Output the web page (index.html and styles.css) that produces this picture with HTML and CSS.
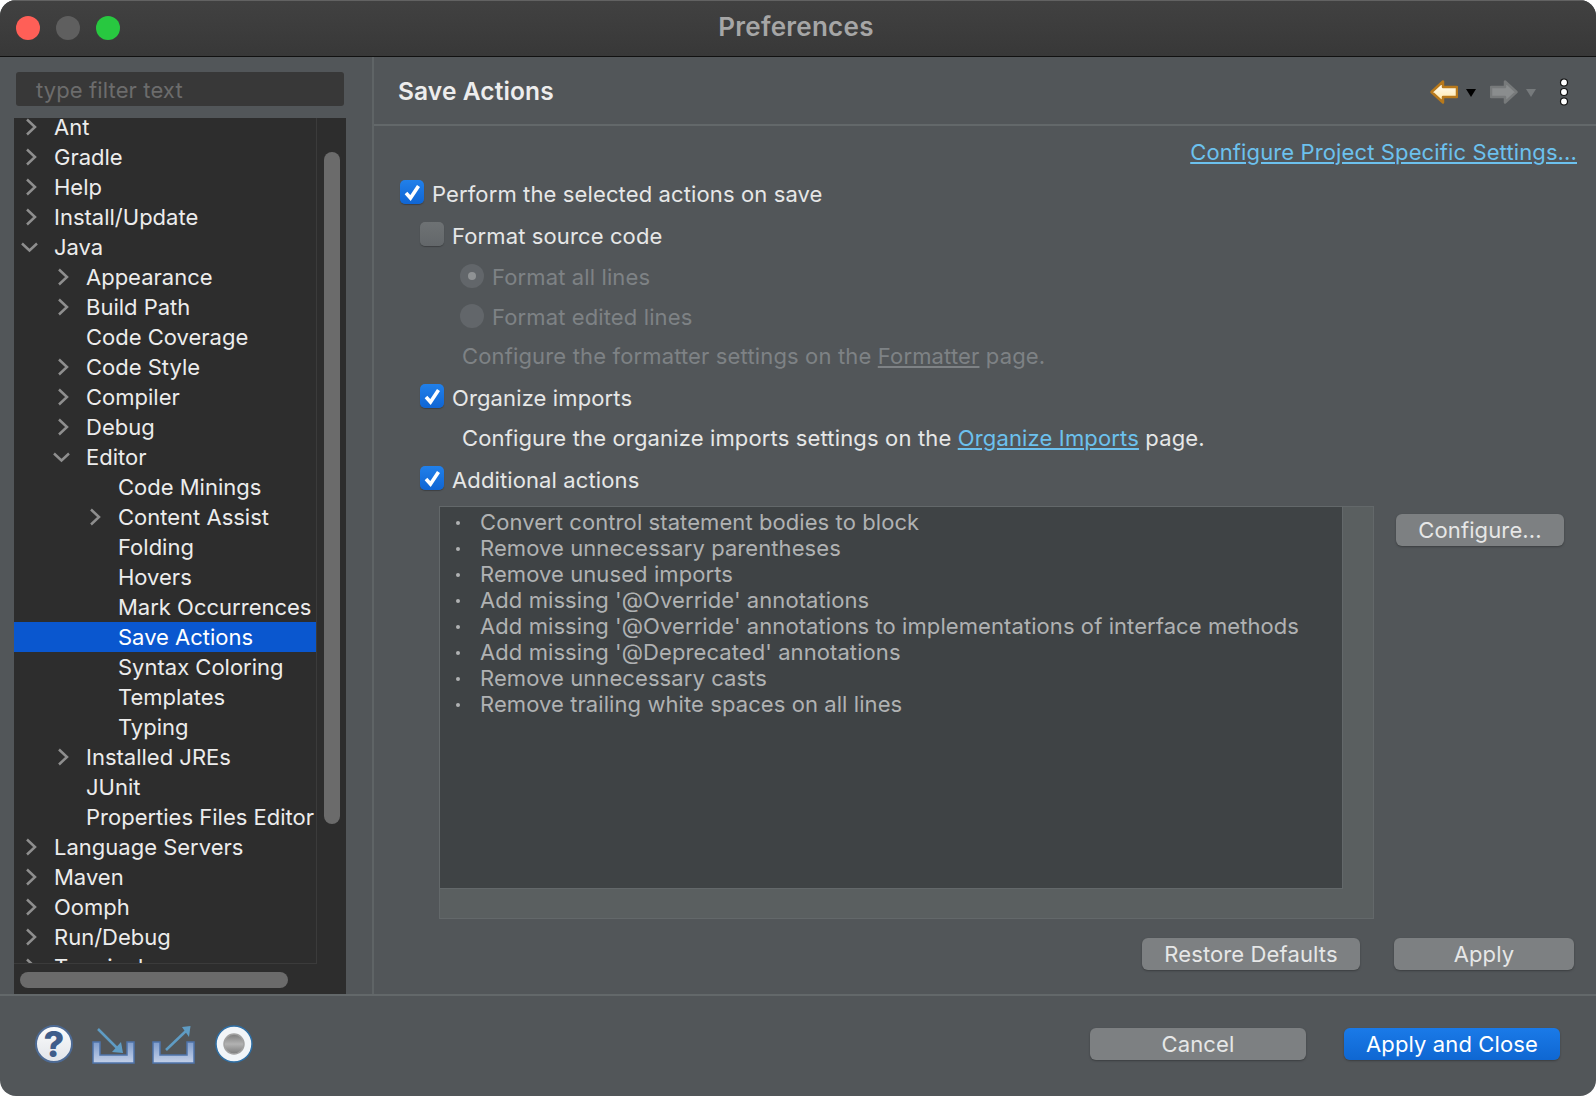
FILE: index.html
```html
<!DOCTYPE html>
<html lang="en">
<head>
    <meta charset="UTF-8">
    <title>Preferences</title>
    <link rel="stylesheet" href="styles.css">
</head>
<body>
<div class="window">
    <div class="titlebar">
        <div class="lights">
            <span class="light red"></span>
            <span class="light grey"></span>
            <span class="light green"></span>
        </div>
        <div class="title">Preferences</div>
    </div>

    <div class="main">
        <div class="side">
            <div class="filter">type filter text</div>
            <div class="tree">
                <div class="tree-view">
                    <div class="tree-list">
                        <div class="node"><svg class="chev" viewBox="0 0 18 18"><path d="M5 1.500l8 7.500-8 7.500"/></svg>Ant</div>
                        <div class="node"><svg class="chev" viewBox="0 0 18 18"><path d="M5 1.500l8 7.500-8 7.500"/></svg>Gradle</div>
                        <div class="node"><svg class="chev" viewBox="0 0 18 18"><path d="M5 1.500l8 7.500-8 7.500"/></svg>Help</div>
                        <div class="node"><svg class="chev" viewBox="0 0 18 18"><path d="M5 1.500l8 7.500-8 7.500"/></svg>Install/Update</div>
                        <div class="node"><svg class="chev" viewBox="0 0 18 18"><path d="M0 5.500l7.500 7 7.500-7"/></svg>Java</div>
                        <div class="node lv1"><svg class="chev" viewBox="0 0 18 18"><path d="M5 1.500l8 7.500-8 7.500"/></svg>Appearance</div>
                        <div class="node lv1"><svg class="chev" viewBox="0 0 18 18"><path d="M5 1.500l8 7.500-8 7.500"/></svg>Build Path</div>
                        <div class="node lv1 leaf">Code Coverage</div>
                        <div class="node lv1"><svg class="chev" viewBox="0 0 18 18"><path d="M5 1.500l8 7.500-8 7.500"/></svg>Code Style</div>
                        <div class="node lv1"><svg class="chev" viewBox="0 0 18 18"><path d="M5 1.500l8 7.500-8 7.500"/></svg>Compiler</div>
                        <div class="node lv1"><svg class="chev" viewBox="0 0 18 18"><path d="M5 1.500l8 7.500-8 7.500"/></svg>Debug</div>
                        <div class="node lv1"><svg class="chev" viewBox="0 0 18 18"><path d="M0 5.500l7.500 7 7.500-7"/></svg>Editor</div>
                        <div class="node lv2 leaf">Code Minings</div>
                        <div class="node lv2"><svg class="chev" viewBox="0 0 18 18"><path d="M5 1.500l8 7.500-8 7.500"/></svg>Content Assist</div>
                        <div class="node lv2 leaf">Folding</div>
                        <div class="node lv2 leaf">Hovers</div>
                        <div class="node lv2 leaf">Mark Occurrences</div>
                        <div class="node lv2 leaf selected">Save Actions</div>
                        <div class="node lv2 leaf">Syntax Coloring</div>
                        <div class="node lv2 leaf">Templates</div>
                        <div class="node lv2 leaf">Typing</div>
                        <div class="node lv1"><svg class="chev" viewBox="0 0 18 18"><path d="M5 1.500l8 7.500-8 7.500"/></svg>Installed JREs</div>
                        <div class="node lv1 leaf">JUnit</div>
                        <div class="node lv1 leaf">Properties Files Editor</div>
                        <div class="node"><svg class="chev" viewBox="0 0 18 18"><path d="M5 1.500l8 7.500-8 7.500"/></svg>Language Servers</div>
                        <div class="node"><svg class="chev" viewBox="0 0 18 18"><path d="M5 1.500l8 7.500-8 7.500"/></svg>Maven</div>
                        <div class="node"><svg class="chev" viewBox="0 0 18 18"><path d="M5 1.500l8 7.500-8 7.500"/></svg>Oomph</div>
                        <div class="node"><svg class="chev" viewBox="0 0 18 18"><path d="M5 1.500l8 7.500-8 7.500"/></svg>Run/Debug</div>
                        <div class="node"><svg class="chev" viewBox="0 0 18 18"><path d="M5 1.500l8 7.500-8 7.500"/></svg>Terminal</div>
                    </div>
                </div>
                <div class="vbar"><div class="vthumb"></div></div>
                <div class="hbar"><div class="hthumb"></div></div>
                <div class="corner"></div>
            </div>
        </div>

        <div class="page">
            <div class="page-head">
                <h1 class="page-title">Save Actions</h1>
                <div class="page-tools">
                    <svg class="arrow" viewBox="0 0 28 24">
                        <defs>
                            <linearGradient id="backFill" x1="0" y1="0" x2="0" y2="1">
                                <stop offset="0" stop-color="#ffffff"/>
                                <stop offset="1" stop-color="#ffe6a0"/>
                            </linearGradient>
                        </defs>
                        <path class="arrow-back" d="M1.500 12L13 1.500V7H27V17H13V22.500Z"/>
                    </svg>
                    <span class="drop"></span>
                    <svg class="arrow fwd" viewBox="0 0 28 24"><path class="arrow-fwd" d="M26.500 12L15 1.500V7H1V17H15V22.500Z"/></svg>
                    <span class="drop off"></span>
                    <svg class="dots" viewBox="0 0 10 28"><circle cx="5" cy="4.500" r="3.500"/><circle cx="5" cy="14" r="3.500"/><circle cx="5" cy="23.500" r="3.500"/></svg>
                </div>
            </div>

            <div class="page-body">
                <div class="link-row"><a class="link" href="#">Configure Project Specific Settings...</a></div>

                <div class="form">
                    <div class="opt"><span class="check on"><svg viewBox="0 0 24 24"><path d="M6 13l4.500 5L18.500 6"/></svg></span>Perform the selected actions on save</div>
                    <div class="opt in1"><span class="check"></span>Format source code</div>
                    <div class="opt in2 off"><span class="radio on"></span>Format all lines</div>
                    <div class="opt in2 off"><span class="radio"></span>Format edited lines</div>
                    <div class="opt note off">Configure the formatter settings on the&nbsp;<u>Formatter</u>&nbsp;page.</div>
                    <div class="opt in1"><span class="check on"><svg viewBox="0 0 24 24"><path d="M6 13l4.500 5L18.500 6"/></svg></span>Organize imports</div>
                    <div class="opt note">Configure the organize imports settings on the&nbsp;<a class="link" href="#">Organize Imports</a>&nbsp;page.</div>
                    <div class="opt in1"><span class="check on"><svg viewBox="0 0 24 24"><path d="M6 13l4.500 5L18.500 6"/></svg></span>Additional actions</div>
                </div>

                <div class="actions">
                    <div class="frame">
                        <ul class="action-list">
                            <li>Convert control statement bodies to block</li>
                            <li>Remove unnecessary parentheses</li>
                            <li>Remove unused imports</li>
                            <li>Add missing '@Override' annotations</li>
                            <li>Add missing '@Override' annotations to implementations of interface methods</li>
                            <li>Add missing '@Deprecated' annotations</li>
                            <li>Remove unnecessary casts</li>
                            <li>Remove trailing white spaces on all lines</li>
                        </ul>
                    </div>
                    <button class="btn btn-configure">Configure...</button>
                </div>

                <div class="page-buttons">
                    <button class="btn btn-restore">Restore Defaults</button>
                    <button class="btn btn-apply">Apply</button>
                </div>
            </div>
        </div>
    </div>

    <div class="footer">
        <div class="foot-icons">
            <div class="help">?</div>
            <svg class="ficon ficon-import" width="44" height="39" viewBox="0 0 44 39">
                <defs>
                    <linearGradient id="trayFill" x1="0" y1="0" x2="0" y2="1">
                        <stop offset="0" stop-color="#7f9ccb"/>
                        <stop offset="1" stop-color="#c3d0e8"/>
                    </linearGradient>
                    <linearGradient id="stopFill" x1="0" y1="0" x2="0" y2="1">
                        <stop offset="0" stop-color="#7c7c7c"/>
                        <stop offset="0.500" stop-color="#b2b2b2"/>
                        <stop offset="1" stop-color="#7c7c7c"/>
                    </linearGradient>
                </defs>
                <path class="tray" d="M1 17H8V30H35V17H42V38H1Z"/>
                <path class="tray-arrow" d="M6 4L27 25"/>
                <path class="tray-head" d="M20 27L31 28L29 17Z"/>
            </svg>
            <svg class="ficon" width="44" height="39" viewBox="0 0 44 39">
                <path class="tray" d="M1 17H8V30H35V17H42V38H1Z"/>
                <path class="tray-arrow" d="M14 25L35 5"/>
                <path class="tray-head" d="M30 2L38.500 1L37 12Z"/>
            </svg>
            <svg class="ficon ficon-record" width="38" height="38" viewBox="0 0 38 38">
                <circle cx="19" cy="19" r="18" fill="#f2f5f8" stroke="#2f6fa5" stroke-width="1.500"/>
                <circle cx="19" cy="19" r="10" fill="url(#stopFill)" stroke="#a2a2a2" stroke-width="1.500"/>
            </svg>
        </div>
        <div class="foot-buttons">
            <button class="btn btn-cancel">Cancel</button>
            <button class="btn btn-primary">Apply and Close</button>
        </div>
    </div>
</div>
</body>
</html>
```

FILE: styles.css
```css
* {
    box-sizing: border-box;
}
html, body {
    margin: 0;
    background: #fff;
}
body {
    font-family: Inter, "Liberation Sans", sans-serif;
    font-size: 22px;
    letter-spacing: .12px;
    color: #e6e7e7;
}
.window {
    width: 1596px;
    height: 1096px;
    background: #525659;
    border-radius: 16px;
    overflow: hidden;
    display: flex;
    flex-direction: column;
}

/* title bar */
.titlebar {
    height: 57px;
    flex: none;
    display: flex;
    align-items: center;
    background: linear-gradient(#414141, #383838);
    border-top: 1px solid #626262;
    border-bottom: 1px solid #111;
}
.lights {
    display: flex;
    gap: 16px;
    margin: 0 0 2px 16px;
    width: 0;
}
.light {
    flex: none;
    width: 24px;
    height: 24px;
    border-radius: 50%;
}
.red { background: #ff5f57; }
.grey { background: #5f5f5f; }
.green { background: #28c840; }
.title {
    flex: 1;
    margin: 0 20px 4px 0;
    text-align: center;
    font-weight: 600;
    font-size: 26px;
    letter-spacing: .25px;
    color: #a6a6a6;
}

.main {
    flex: 1;
    display: flex;
    min-height: 0;
}

/* left side */
.side {
    width: 374px;
    flex: none;
    padding: 15px 0 0 14px;
    border-right: 2px solid #5f6466;
}
.filter {
    width: 328px;
    height: 34px;
    margin-left: 2px;
    padding: 1px 0 0 20px;
    line-height: 34px;
    background: #383838;
    border-radius: 3px;
    color: #6c6c6c;
}
.tree {
    width: 332px;
    height: 876px;
    margin-top: 12px;
    background: #2d2d2d;
    display: grid;
    grid-template-columns: 303px 29px;
    grid-template-rows: 846px 30px;
    letter-spacing: 0;
}
.tree-view {
    overflow: hidden;
    border-right: 1px solid #3b3b3b;
    border-bottom: 1px solid #3b3b3b;
}
.tree-list {
    margin-top: -6px;
}
.node {
    height: 30px;
    display: flex;
    align-items: center;
    padding-left: 40px;
    white-space: nowrap;
    color: #ececec;
}
.node.lv1 { padding-left: 72px; }
.node.lv2 { padding-left: 104px; }
.node.selected {
    background: #0a57cf;
    color: #fff;
}
.chev {
    flex: none;
    width: 18px;
    height: 18px;
    margin-left: -32px;
    margin-right: 14px;
    fill: none;
    stroke: #8e8e8e;
    stroke-width: 2.500;
    overflow: visible;
}
.vthumb {
    width: 16px;
    height: 672px;
    margin: 34px 0 0 7px;
    border-radius: 8px;
    background: #6b6b6b;
}
.hthumb {
    width: 268px;
    height: 16px;
    margin: 8px 0 0 6px;
    border-radius: 8px;
    background: #6b6b6b;
}

/* right page */
.page {
    flex: 1;
    display: flex;
    flex-direction: column;
}
.page-head {
    height: 69px;
    flex: none;
    display: flex;
    align-items: center;
    justify-content: space-between;
    padding: 0 27px 1px 24px;
    border-bottom: 2px solid #63686a;
}
.page-title {
    margin: 2px 0 0;
    font-size: 24.500px;
    font-weight: 600;
    color: #ededed;
}
.page-tools {
    display: flex;
    align-items: center;
    margin-top: 4px;
}
.arrow {
    width: 28px;
    height: 24px;
}
.arrow-back {
    fill: url(#backFill);
    stroke: #b8791b;
    stroke-width: 2.500;
    stroke-linejoin: round;
}
.arrow-fwd {
    fill: #8a8d8e;
    stroke: #777a7b;
    stroke-width: 2.500;
    stroke-linejoin: round;
}
.drop {
    width: 0;
    height: 0;
    margin: 2px 0 0 8px;
    border-left: 5px solid transparent;
    border-right: 5px solid transparent;
    border-top: 8px solid #000;
}
.drop.off {
    border-top-color: #767a7c;
}
.arrow.fwd {
    margin-left: 14px;
}
.dots {
    width: 10px;
    height: 28px;
    margin-left: 23px;
    fill: #fff;
    stroke: #111;
    stroke-width: 1.200;
}
.page-body {
    flex: 1;
    padding: 0 19px 0 26px;
    display: flex;
    flex-direction: column;
}
.link-row {
    margin-top: 11px;
    height: 30px;
    line-height: 30px;
    text-align: right;
}
.link {
    color: #6cc1ee;
    text-decoration: underline;
}
.form {
    margin-top: 12px;
    display: grid;
    grid-template-rows: 42px 41px 40px 39px 42px 40px 42px 42px;
}
.opt {
    height: 30px;
    display: flex;
    align-items: center;
    white-space: pre;
}
.opt.in1 { padding-left: 20px; }
.opt.in2 { padding-left: 60px; }
.opt.note {
    padding-left: 62px;
    letter-spacing: .15px;
}
.opt.off { color: #7e8285; }
.check {
    flex: none;
    width: 24px;
    height: 24px;
    margin: 0 8px 4px 0;
    border-radius: 5px;
    background: linear-gradient(#6e7274, #63676a);
    box-shadow: 0 1px 1px #3d4042;
}
.check.on {
    background: linear-gradient(#2180ea, #0f65d4);
}
.check svg {
    display: block;
    fill: none;
    stroke: #fff;
    stroke-width: 3.600;
}
.radio {
    flex: none;
    width: 24px;
    height: 24px;
    margin: 0 8px 2px 0;
    border-radius: 50%;
    background: #62666a;
    display: flex;
    align-items: center;
    justify-content: center;
}
.radio.on::after {
    content: "";
    width: 8px;
    height: 8px;
    border-radius: 50%;
    background: #8f9294;
}

.actions {
    display: flex;
    align-items: flex-start;
    margin-top: -1px;
}
.frame {
    width: 935px;
    height: 413px;
    margin-left: 39px;
    background: #5a5f60;
    border: 1px solid #63686a;
}
.action-list {
    width: 903px;
    height: 382px;
    margin: 0;
    padding: 2px 0 0 40px;
    list-style: none;
    background: #3f4345;
    border-right: 1px solid #63686a;
    border-bottom: 1px solid #63686a;
    color: #b0b2b3;
    letter-spacing: .08px;
}
.action-list li {
    height: 26px;
    line-height: 26px;
    position: relative;
}
.action-list li::before {
    content: "";
    position: absolute;
    left: -24px;
    top: 12px;
    width: 4px;
    height: 4px;
    border-radius: 50%;
    background: #b0b2b3;
}
.btn {
    height: 32px;
    padding: 0;
    border: 0;
    border-radius: 6px;
    font: inherit;
    letter-spacing: inherit;
    color: #e6e7e7;
    background: #7d8082;
    box-shadow: 0 1px 2px #3b3e40;
}
.btn-configure {
    width: 168px;
    margin: 8px 0 0 22px;
}
.page-buttons {
    display: flex;
    justify-content: flex-end;
    gap: 34px;
    margin: 19px 3px 0 0;
}
.btn-restore { width: 218px; }
.btn-apply { width: 180px; }

/* footer */
.footer {
    height: 102px;
    flex: none;
    display: flex;
    justify-content: space-between;
    border-top: 2px solid #63686a;
}
.foot-icons {
    display: flex;
    align-items: flex-start;
    margin: 29px 0 0 35px;
    gap: 16px;
}
.help {
    width: 38px;
    height: 38px;
    border-radius: 50%;
    border: 2px solid #4d6a94;
    background: linear-gradient(#fafbfc, #e2e5ea);
    color: #3f5d8a;
    font-size: 36px;
    font-weight: 800;
    line-height: 34px;
    text-align: center;
}
.ficon-import,
.ficon-record {
    margin-left: 3px;
}
.tray {
    fill: url(#trayFill);
    stroke: #4f74ab;
    stroke-width: 1.500;
}
.tray-arrow {
    fill: none;
    stroke: #5f9cc4;
    stroke-width: 2.500;
}
.tray-head {
    fill: #5f9cc4;
}
.foot-buttons {
    display: flex;
    gap: 38px;
    margin: 32px 36px 0 0;
}
.btn-cancel { width: 216px; }
.btn-primary {
    width: 216px;
    color: #fff;
    background: linear-gradient(#1a7ae8, #0f67d2);
}
```
